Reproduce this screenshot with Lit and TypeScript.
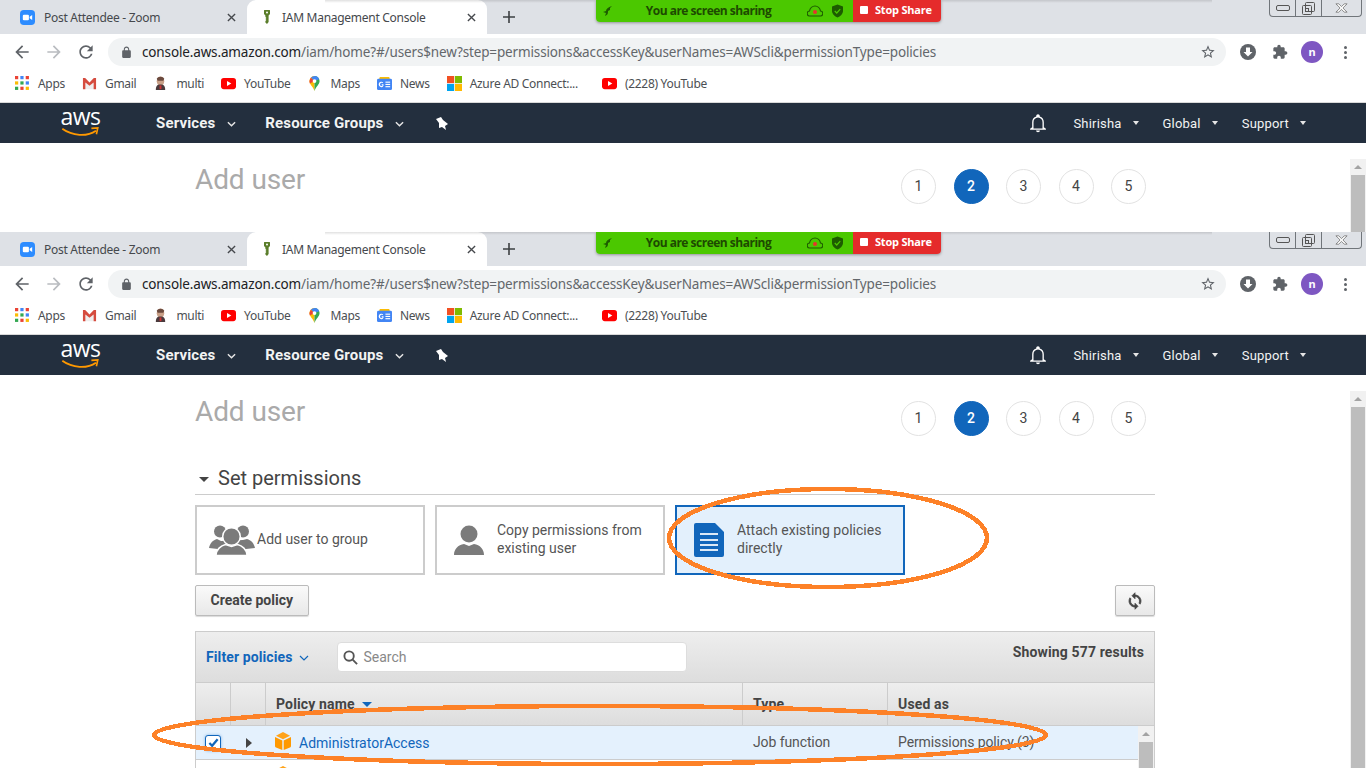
import { css, html, LitElement, svg } from "lit";
import { customElement, property } from "lit/decorators.js";

const youtube = svg`<svg class="fav" viewBox="0 0 16 16"><rect x="0" y="2" width="16" height="12" rx="3" fill="#f00"/><path d="M6.400 5.400 11 8l-4.600 2.600z" fill="#fff"/></svg>`;

const bookmarks = [
    {
        label: "Apps",
        icon: svg`<svg class="fav" viewBox="0 0 14 14">
            <rect width="3" height="3" fill="#ea4335"/><rect x="5" width="3" height="3" fill="#4285f4"/><rect x="10" width="3" height="3" fill="#ea4335"/>
            <rect y="5" width="3" height="3" fill="#fbbc05"/><rect x="5" y="5" width="3" height="3" fill="#34a853"/><rect x="10" y="5" width="3" height="3" fill="#4285f4"/>
            <rect y="10" width="3" height="3" fill="#34a853"/><rect x="5" y="10" width="3" height="3" fill="#ea4335"/><rect x="10" y="10" width="3" height="3" fill="#fbbc05"/></svg>`,
    },
    {
        label: "Gmail",
        icon: svg`<svg class="fav" viewBox="0 0 16 16"><path d="M3.600 6.800 8 10.400l4.400-3.600V14H3.600z" fill="#eee"/><path d="M1 2h2.400L8 7l4.600-5H15v12h-2.600V6.800L8 10.400 3.600 6.800V14H1z" fill="#d54c3f"/></svg>`,
    },
    {
        label: "multi",
        icon: svg`<svg class="fav" viewBox="0 0 16 16"><ellipse cx="8" cy="5.500" rx="4" ry="5" fill="#c9a088"/><path d="M4 3c1-3 7-3 8 0l-1 2H5z" fill="#6b4a3e"/><path d="M3 15c0-5 2-6 5-6s5 1 5 6z" fill="#4a3a3d"/><rect x="7" y="10" width="2" height="4" fill="#c33"/></svg>`,
    },
    { label: "YouTube", icon: youtube },
    {
        label: "Maps",
        icon: svg`<svg class="fav" viewBox="0 0 16 16"><path d="M8 0a5.400 5.400 0 0 0-5.400 5.400C2.600 9 6.500 11.500 8 16z" fill="#fbbc05"/><path d="M8 0a5.400 5.400 0 0 1 5.400 5.400C13.400 9 9.500 11.500 8 16z" fill="#34a853"/><path d="M4 1.800 8 5.400 3 8 2.600 5.400z" fill="#ea4335"/><path d="M8 0a5.400 5.400 0 0 1 5 3.400L8 5.400 4.200 1.600A5.400 5.400 0 0 1 8 0z" fill="#4285f4"/><circle cx="8" cy="5.400" r="2" fill="#fff"/></svg>`,
    },
    {
        label: "News",
        icon: svg`<svg class="fav" viewBox="0 0 16 16"><path d="M2 4 3 1h10l1 3z" fill="#fbbc05"/><rect y="3" width="16" height="12" rx="1.500" fill="#4285f4"/><rect x="9" y="6" width="5" height="1.200" fill="#fff"/><rect x="9" y="8.400" width="5" height="1.200" fill="#fff"/><rect x="9" y="10.800" width="5" height="1.200" fill="#fff"/><path d="M7 8.700H5v1.100h1c-.2.600-.6.900-1.100.900a1.700 1.700 0 0 1 0-3.400c.4 0 .8.100 1 .400l.8-.8a2.900 2.900 0 1 0-1.800 5c1.600 0 2.200-1.200 2.100-3.600z" fill="#fff"/></svg>`,
    },
    {
        label: "Azure AD Connect:...",
        icon: svg`<svg class="fav" viewBox="0 0 16 16"><rect width="7.600" height="7.600" fill="#f25022"/><rect x="8.400" width="7.600" height="7.600" fill="#7fba00"/><rect y="8.400" width="7.600" height="7.600" fill="#00a4ef"/><rect x="8.400" y="8.400" width="7.600" height="7.600" fill="#ffb900"/></svg>`,
    },
    { label: "(2228) YouTube", icon: youtube },
];

const columns = ["Policy name", "Type", "Used as"];
const steps = [1, 2, 3, 4, 5];

@customElement("browser-frame")
class BrowserFrame extends LitElement {
    // the first capture is cut off just under the step circles
    @property({ type: Boolean, reflect: true })
    cut: boolean = false;

    renderChrome() {
        return html`
      <div class="tabs">
        <div class="tab">
          <svg class="fav" viewBox="0 0 16 16"><rect width="16" height="16" rx="4" fill="#2d8cff"/><rect x="3" y="5" width="6.500" height="6" rx="1.200" fill="#fff"/><path d="M10.300 7.300 13 5.400v5.200l-2.700-1.900z" fill="#fff"/></svg>
          <span class="tab-title">Post Attendee - Zoom</span>
          <svg class="tab-x" viewBox="0 0 10 10"><path d="M1 1l8 8M9 1l-8 8"/></svg>
        </div>
        <div class="tab active">
          <svg class="fav" viewBox="4 1 8 15"><path d="M5 1.500a3.500 3.500 0 0 1 6 0v3.500L9.600 6.500V13L8 15l-1.600-1.500V12l1-1-1-1 1-1-1-1V6.500L5 5z" fill="#5a7d2a"/><circle cx="8" cy="3.500" r="1" fill="#fff"/></svg>
          <span class="tab-title">IAM Management Console</span>
          <svg class="tab-x" viewBox="0 0 10 10"><path d="M1 1l8 8M9 1l-8 8"/></svg>
        </div>
        <svg class="tab-plus" viewBox="0 0 12 12"><path d="M6 0v12M0 6h12"/></svg>
      </div>
      <div class="toolbar">
        <svg class="tool" viewBox="0 0 24 24" fill="#5f6368"><path d="M20 11H7.800l5.600-5.600L12 4l-8 8 8 8 1.400-1.400L7.800 13H20z"/></svg>
        <svg class="tool" viewBox="0 0 24 24" fill="#b9bcc0"><path d="M4 11h12.200l-5.600-5.600L12 4l8 8-8 8-1.400-1.400 5.600-5.600H4z"/></svg>
        <svg class="tool" viewBox="0 0 24 24" fill="#5f6368"><path d="M17.650 6.350A7.958 7.958 0 0 0 12 4c-4.420 0-7.990 3.580-7.990 8s3.570 8 7.990 8c3.730 0 6.840-2.550 7.730-6h-2.080A5.990 5.990 0 0 1 12 18c-3.310 0-6-2.690-6-6s2.690-6 6-6c1.660 0 3.140.690 4.220 1.780L13 11h7V4l-2.350 2.350z"/></svg>
        <div class="omnibox">
          <svg class="lock" viewBox="0 0 24 24" fill="#5f6368"><path d="M18 8h-1V6c0-2.760-2.240-5-5-5S7 3.240 7 6v2H6c-1.100 0-2 .9-2 2v10c0 1.100.9 2 2 2h12c1.100 0 2-.9 2-2V10c0-1.100-.9-2-2-2zM9 6c0-1.660 1.340-3 3-3s3 1.340 3 3v2H9V6z"/></svg>
          <span class="url"><b>console.aws.amazon.com</b>/iam/home?#/users$new?step=permissions&accessKey&userNames=AWScli&permissionType=policies</span>
          <svg class="star" viewBox="0 0 24 24" fill="#5f6368"><path d="M22 9.240l-7.190-.620L12 2 9.190 8.630 2 9.240l5.460 4.730L5.820 21 12 17.270 18.180 21l-1.630-7.030L22 9.240zM12 15.400l-3.760 2.270 1-4.280-3.320-2.880 4.380-.380L12 6.100l1.710 4.040 4.380.380-3.320 2.880 1 4.280L12 15.400z"/></svg>
        </div>
        <div class="tool-end">
          <svg class="end-icon" viewBox="0 0 16 16"><circle cx="8" cy="8" r="8" fill="#5f6368"/><path d="M6 3.500h4V8h2.500L8 12.500 3.500 8H6z" fill="#fff"/></svg>
          <svg class="end-icon" viewBox="0 0 24 24" fill="#5f6368"><path d="M20.500 11H19V7c0-1.100-.9-2-2-2h-4V3.500C13 2.120 11.880 1 10.500 1S8 2.120 8 3.500V5H4c-1.100 0-1.990.9-1.990 2v3.800H3.500c1.490 0 2.700 1.210 2.700 2.700s-1.210 2.700-2.700 2.700H2V20c0 1.100.9 2 2 2h3.800v-1.500c0-1.490 1.210-2.700 2.700-2.700 1.490 0 2.700 1.210 2.700 2.700V22H17c1.100 0 2-.9 2-2v-4h1.500c1.380 0 2.500-1.120 2.500-2.500S21.880 11 20.500 11z"/></svg>
          <span class="avatar">n</span>
          <span class="kebab"><i></i><i></i><i></i></span>
        </div>
      </div>
      <div class="bookmarks">
        ${bookmarks.map((b) => html`<span class="bookmark">${b.icon}<span>${b.label}</span></span>`)}
      </div>`;
    }

    renderNav() {
        return html`
      <nav class="nav">
        <span class="aws">
          <span class="aws-word">aws</span>
          <svg class="smile" viewBox="0 0 42 11"><path d="M1 2c11 8 27 9 37 2" fill="none" stroke="#f90" stroke-width="2"/><path d="M33 1.500l7-.5-1.500 7" fill="none" stroke="#f90" stroke-width="1.800"/></svg>
        </span>
        <span class="nav-main services">Services</span>
        <svg class="chev" viewBox="0 0 10 6"><path d="M1 1l4 4 4-4"/></svg>
        <span class="nav-main groups">Resource Groups</span>
        <svg class="chev" viewBox="0 0 10 6"><path d="M1 1l4 4 4-4"/></svg>
        <svg class="pin" viewBox="434 115 14 15" fill="#fff"><path d="M435 118l5-2 2 3 5 4-3 2 1 4-4-3-3 1v-5z"/></svg>
        <div class="nav-right">
          <svg class="bell" viewBox="0 0 24 24" fill="#fff"><path d="M12 23c1.300 0 2.300-.9 2.300-2h-4.600c0 1.100 1 2 2.300 2zm7-6v-6c0-3.400-1.800-6.200-4.900-6.900V3.500c0-1.100-.9-2-2.100-2s-2.100.9-2.100 2v.6C6.800 4.800 5 7.600 5 11v6l-2.500 2v1h19v-1L19 17zm-1.600 1.500H6.600V11c0-2.900 2-5.500 5.400-5.500s5.400 2.600 5.400 5.500z"/></svg>
          ${["Shirisha", "Global", "Support"].map(
              (m) => html`<span class="nav-item">${m}<i class="caret"></i></span>`,
          )}
        </div>
      </nav>`;
    }

    renderCards() {
        return html`
      <div class="cards">
        <div class="card">
          <svg class="card-icon group" viewBox="0 0 46 30" fill="#7b7b7b">
            <circle cx="11" cy="6.500" r="6"/><circle cx="34" cy="6.500" r="6"/>
            <path d="M0 23c1-5 4-8 8-9l4 2 22-1 4-1c4 1 7 4 8 9l-9 1H9z"/>
            <circle cx="22.500" cy="11.500" r="8.800" stroke="#fff" stroke-width="1.500"/>
            <path d="M7 30.500c0-6 5-10 9.500-11l6 2 6-2c4.500 1 9.500 5 9.500 11z" stroke="#fff" stroke-width="1.500"/>
          </svg>
          <span class="card-text">Add user to group</span>
        </div>
        <div class="card">
          <svg class="card-icon" viewBox="0 0 30 30" fill="#7b7b7b" width="30" height="30">
            <circle cx="15" cy="9" r="8.500"/><path d="M0 30c0-6 4-10 10-11l5 2 5-2c6 1 10 5 10 11z"/>
          </svg>
          <span class="card-text">Copy permissions from existing user</span>
        </div>
        <div class="card selected">
          <svg class="card-icon" viewBox="0 0 30 34" width="30" height="34">
            <path d="M2 0h19l9 9v23a2 2 0 0 1-2 2H2a2 2 0 0 1-2-2V2a2 2 0 0 1 2-2z" fill="#1166bb"/>
            <path d="M6 10h18v2H6zM6 16h18v2H6zM6 21h18v2H6zM6 26h18v2H6z" fill="#dbe9f7"/>
          </svg>
          <span class="card-text">Attach existing policies directly</span>
        </div>
      </div>`;
    }

    renderTable() {
        const cube = svg`<svg class="cube" viewBox="0 0 16 18"><path d="M0 5 7.300 8.500V18L1 15.500a1.500 1.500 0 0 1-1-1.400z" fill="#f90"/><path d="M16 5 8.700 8.500V18l6.300-2.500a1.500 1.500 0 0 0 1-1.400z" fill="#f90"/><path d="M8 0l7 3.700-7 3.600-7-3.600z" fill="#ffa31a"/></svg>`;
        return html`
      <div class="table">
        <div class="filter">
          <span class="filter-label">Filter policies</span>
          <svg class="filter-chev" viewBox="0 0 10 6"><path d="M1 1l4 4 4-4"/></svg>
          <div class="search">
            <svg class="glass" viewBox="0 0 16 16"><circle cx="6.500" cy="6.500" r="5"/><path d="M10.300 10.300 15 15"/></svg>
            <span>Search</span>
          </div>
          <span class="count">Showing 577 results</span>
        </div>
        <div class="grid head">
          <span></span>
          <span></span>
          ${columns.map(
              (c, i) => html`<span class="th">${c}${i === 0 ? html`<i class="sort"></i>` : ""}</span>`,
          )}
        </div>
        <div class="body">
          <div class="rows">
            <div class="grid row on">
              <span class="check-cell"><span class="check"><svg viewBox="0 0 12 12"><path d="M1.500 6.500 4.500 9.500 10.500 2.500"/></svg></span></span>
              <span class="arrow-cell"><i class="arrow"></i></span>
              <span class="name">${cube}<a>AdministratorAccess</a></span>
              <span class="td">Job function</span>
              <span class="td">Permissions policy (3)</span>
            </div>
            <div class="grid row">
              <span></span>
              <span></span>
              <span class="name">${cube}</span>
            </div>
          </div>
          <div class="inner-scroll"><i class="up"></i><i class="thumb"></i></div>
        </div>
      </div>`;
    }

    render() {
        return html`
      ${this.renderChrome()} ${this.renderNav()}
      <div class="page">
        <main class="main">
          <div class="title-row">
            <h1>Add user</h1>
            <div class="steps">
              ${steps.map((s) => html`<span class="step ${s === 2 ? "now" : ""}">${s}</span>`)}
            </div>
          </div>
          ${this.cut
              ? ""
              : html`
          <h2><i class="down"></i>Set permissions</h2>
          ${this.renderCards()}
          <div class="actions">
            <button class="btn">Create policy</button>
            <button class="btn refresh">
              <svg viewBox="0 0 24 24" fill="#444" stroke="#444"><path d="M12 4V1L8 5l4 4V6c3.310 0 6 2.690 6 6 0 1.010-.25 1.970-.7 2.800l1.460 1.460C19.540 15.030 20 13.570 20 12c0-4.420-3.580-8-8-8zm0 14c-3.310 0-6-2.690-6-6 0-1.010.25-1.970.7-2.800L5.240 7.740C4.460 8.970 4 10.430 4 12c0 4.420 3.580 8 8 8v3l4-4-4-4v3z"/></svg>
            </button>
          </div>
          ${this.renderTable()}`}
        </main>
        <div class="page-scroll"><i class="up"></i><i class="thumb"></i></div>
      </div>

      <div class="top-shadow"></div>
      <div class="share">
        <div class="share-green">
          <svg class="share-leaf" viewBox="0 0 10 10" fill="#1d5c00"><path d="M9 0C5 1 3 3 3 5L0 6l3 1-1 3c3-1 3-3 3-5l2-1V2z"/></svg>
          <span>You are screen sharing</span>
          <svg class="share-cloud" viewBox="0 0 16 12"><path d="M3 11a2.500 2.500 0 0 1-.5-5C3 3 5.500 1 8 1s5 2 5.500 5a2.500 2.500 0 0 1-.5 5z" fill="none" stroke="#1d5c00" stroke-width="1.200"/><circle cx="8" cy="7" r="2" fill="#e8322f"/></svg>
          <svg class="share-shield" viewBox="0 0 12 14"><path d="M6 0l6 2v5c0 3-3 6-6 7-3-1-6-4-6-7V2z" fill="#1d5c00"/><path d="M3 7l2.200 2.200L9 5" fill="none" stroke="#4bc800" stroke-width="1.300"/></svg>
        </div>
        <div class="share-red"><i></i><span>Stop Share</span></div>
      </div>
      <div class="win">
        <span><i class="win-min"></i></span>
        <span><svg class="win-max" viewBox="0 0 13 13"><rect x="3.500" y="0.500" width="9" height="9" rx="1"/><rect x="0.500" y="3.500" width="9" height="9" rx="1"/><rect x="3.500" y="6.500" width="3" height="3"/></svg></span>
        <span><svg class="win-x" viewBox="0 0 14 10"><path d="M1 0.500h3l3 3 3-3h3l-4.500 4.500 4.500 4.500h-3l-3-3-3 3h-3l4.500-4.500z"/></svg></span>
      </div>
    `;
    }

    static styles = css`
    :host {
        display: flex;
        flex-direction: column;
        position: relative;
        height: 536px;
        overflow: hidden;
        background: #fff;
        font-family: Roboto, sans-serif;
    }
    :host([cut]) {
        height: 232px;
    }
    i {
        display: block;
    }

    .tabs {
        display: flex;
        align-items: center;
        flex: none;
        height: 34px;
        padding-left: 5px;
        background: #dee1e6;
        font: 12px "Noto Sans", sans-serif;
        color: #45484c;
    }
    .tab {
        display: flex;
        align-items: center;
        width: 242px;
        height: 34px;
        box-sizing: border-box;
        padding: 0 10px 0 15px;
    }
    .tab.active {
        width: 240px;
        background: #fff;
        border-radius: 9px 9px 0 0;
    }
    .tab .fav {
        width: 15px;
        height: 15px;
    }
    .tab.active .fav {
        width: 10px;
    }
    .tab-title {
        flex: 1;
        margin-left: 9px;
        letter-spacing: -0.28px;
    }
    .tab.active .tab-title {
        margin-left: 10px;
    }
    .tab-x {
        width: 9px;
        height: 9px;
        margin-right: 1px;
        stroke: #45484c;
        stroke-width: 1.500;
    }
    .tab-plus {
        width: 12px;
        height: 12px;
        margin-left: 16px;
        stroke: #3c4043;
        stroke-width: 1.600;
    }

    .toolbar {
        display: flex;
        align-items: center;
        flex: none;
        height: 32px;
        padding: 2px 0 0 12px;
        background: #fff;
    }
    .tool {
        width: 20px;
        height: 20px;
        margin-right: 12px;
    }
    .omnibox {
        display: flex;
        align-items: center;
        width: 1118px;
        height: 28px;
        box-sizing: border-box;
        padding: 0 10px 0 12px;
        background: #f1f3f4;
        border-radius: 14px;
    }
    .lock {
        width: 13px;
        height: 13px;
    }
    .url {
        flex: 1;
        margin-left: 9px;
        font: 13.500px "Noto Sans", sans-serif;
        letter-spacing: -0.14px;
        color: #63676b;
        white-space: nowrap;
    }
    .url b {
        font-weight: 400;
        color: #202124;
    }
    .star {
        width: 16px;
        height: 16px;
    }
    .tool-end {
        display: flex;
        align-items: center;
        margin-left: 14px;
    }
    .end-icon {
        width: 16px;
        height: 16px;
        margin-right: 16px;
    }
    .avatar {
        width: 22px;
        height: 22px;
        margin-left: -3px;
        border-radius: 50%;
        background: #7e57c2;
        color: #fff;
        font: 700 11px/22px "Noto Sans", sans-serif;
        text-align: center;
    }
    .kebab {
        display: flex;
        flex-direction: column;
        gap: 2px;
        margin-left: 21px;
    }
    .kebab i {
        width: 3px;
        height: 3px;
        border-radius: 50%;
        background: #5f6368;
    }

    .bookmarks {
        display: flex;
        align-items: center;
        flex: none;
        gap: 17px;
        height: 31px;
        padding: 0 0 3px 15px;
        background: #fff;
        border-bottom: 1px solid #d9d9d9;
        font: 12px "Noto Sans", sans-serif;
        letter-spacing: -0.3px;
        color: #4c4f53;
    }
    .bookmark {
        display: flex;
        align-items: center;
        gap: 8px;
        white-space: nowrap;
    }
    .bookmark:nth-child(7) {
        margin-right: 7px;
    }
    .fav {
        flex: none;
        width: 15px;
        height: 15px;
    }

    .nav {
        display: flex;
        align-items: center;
        flex: none;
        height: 40px;
        padding-left: 60px;
        background: #232f3e;
        color: #fff;
    }
    .aws {
        display: flex;
        flex-direction: column;
        align-items: center;
        width: 41px;
        height: 33px;
        margin-top: -2px;
    }
    .aws-word {
        font: 400 23px/21px "Open Sans", sans-serif;
        letter-spacing: -0.5px;
    }
    .smile {
        width: 41px;
        height: 10px;
    }
    .nav-main {
        font-size: 15px;
        font-weight: 700;
        letter-spacing: 0.15px;
        color: #f2f3f3;
    }
    .services {
        margin-left: 55px;
    }
    .groups {
        margin-left: 29px;
    }
    .chev {
        width: 9px;
        height: 6px;
        margin: 2px 0 0 12px;
        fill: none;
        stroke: #e6e6e6;
        stroke-width: 1.600;
    }
    .pin {
        width: 14px;
        height: 15px;
        margin-left: 31px;
    }
    .nav-right {
        display: flex;
        align-items: center;
        margin-left: auto;
        padding-right: 49px;
    }
    .bell {
        width: 20px;
        height: 20px;
        margin-right: 25px;
    }
    .nav-item {
        display: flex;
        align-items: center;
        gap: 11px;
        margin-left: 13px;
        margin-right: 11px;
        font-size: 13px;
        letter-spacing: 0.2px;
        color: #f2f3f3;
    }
    .nav-item:first-of-type {
        margin-left: 0;
    }
    .caret {
        width: 0;
        height: 0;
        border: 3.500px solid transparent;
        border-top: 4px solid #e6e6e6;
        border-bottom: 0;
    }

    .page {
        display: flex;
        flex: none;
        align-items: flex-start;
    }
    .main {
        flex: none;
        width: 960px;
        margin-left: 195px;
    }
    .title-row {
        display: flex;
        justify-content: space-between;
        height: 87px;
    }
    h1 {
        margin: 21px 0 0;
        font-size: 28px;
        line-height: 32px;
        font-weight: 400;
        letter-spacing: -0.1px;
        color: #aaa;
    }
    .steps {
        display: flex;
        gap: 17.500px;
        margin: 26px 9px 0 0;
    }
    .step {
        width: 35px;
        height: 35px;
        box-sizing: border-box;
        border: 1px solid #e2e2e2;
        border-radius: 50%;
        font-size: 14px;
        line-height: 33px;
        text-align: center;
        color: #444;
    }
    .step.now {
        border-color: #1166bb;
        background: #1166bb;
        color: #fff;
        font-weight: 500;
    }
    h2 {
        display: flex;
        align-items: center;
        height: 32px;
        margin: 0;
        border-bottom: 1px solid #ccc;
        font-size: 20px;
        font-weight: 400;
        color: #444;
    }
    .down {
        width: 0;
        height: 0;
        margin: 3px 9px 0 4px;
        border: 5px solid transparent;
        border-top: 5px solid #444;
        border-bottom: 0;
    }
    .cards {
        display: flex;
        gap: 10px;
        margin-top: 10px;
    }
    .card {
        display: flex;
        align-items: center;
        width: 230px;
        height: 70px;
        box-sizing: border-box;
        border: 2px solid #ccc;
        font-size: 14px;
        line-height: 18px;
        color: #555;
    }
    .card.selected {
        border-color: #1166bb;
        background: #e3f0fc;
    }
    .card-icon {
        flex: none;
        margin: 0 13px 0 17px;
    }
    .card-icon.group {
        width: 46px;
        height: 30px;
        margin: 0 2px 0 12px;
    }
    .card-text {
        width: 165px;
        padding-bottom: 2px;
    }
    .actions {
        display: flex;
        justify-content: space-between;
        margin-top: 10px;
    }
    .btn {
        height: 31px;
        padding: 0 14.500px 2px;
        border: 1px solid #bbb;
        border-radius: 2px;
        background: linear-gradient(#fafafa, #e8e8e8);
        box-shadow: 0 1px 1px rgba(0, 0, 0, 0.15);
        font: 700 14px Roboto, sans-serif;
        color: #444;
    }
    .refresh {
        width: 40px;
        padding: 0;
    }
    .refresh svg {
        width: 18px;
        height: 18px;
        margin-top: 3px;
    }

    .table {
        margin-top: 15px;
        border-left: 1px solid #ccc;
        border-right: 1px solid #ccc;
    }
    .filter {
        display: flex;
        align-items: center;
        height: 52px;
        box-sizing: border-box;
        padding: 0 10px;
        border-top: 1px solid #ccc;
        border-bottom: 1px solid #ccc;
        background: linear-gradient(#eee, #ddd);
    }
    .filter-label {
        font-size: 14px;
        font-weight: 700;
        letter-spacing: 0.1px;
        color: #1166bb;
    }
    .filter-chev {
        width: 10px;
        height: 6px;
        margin: 2px 0 0 7px;
        fill: none;
        stroke: #1166bb;
        stroke-width: 1.200;
    }
    .search {
        display: flex;
        align-items: center;
        gap: 5px;
        width: 350px;
        height: 30px;
        box-sizing: border-box;
        margin-left: 28px;
        padding-left: 5px;
        background: #fff;
        border: 1px solid #ddd;
        border-radius: 4px;
        font-size: 14px;
        color: #888;
    }
    .glass {
        width: 15px;
        height: 15px;
        fill: none;
        stroke: #555;
        stroke-width: 2;
    }
    .count {
        align-self: flex-start;
        margin: 12px 0 0 auto;
        font-size: 14px;
        font-weight: 700;
        letter-spacing: 0.15px;
        color: #444;
    }
    .grid {
        display: grid;
        grid-template-columns: 35px 35px 477px 145px 1fr;
    }
    .head {
        height: 43px;
        box-sizing: border-box;
        border-bottom: 1px solid #ccc;
        background: linear-gradient(#eee, #ddd);
    }
    .head > span {
        border-right: 1px solid #ccc;
    }
    .head > span:last-child {
        border-right: 0;
    }
    .th {
        display: flex;
        align-items: center;
        gap: 7px;
        padding: 0 10px;
        font-size: 14px;
        font-weight: 700;
        letter-spacing: 0.15px;
        color: #444;
    }
    .sort {
        width: 0;
        height: 0;
        border: 5px solid transparent;
        border-top: 5px solid #1166bb;
        border-bottom: 0;
    }
    .body {
        display: flex;
    }
    .rows {
        flex: 1;
    }
    .row {
        height: 34px;
        box-sizing: border-box;
        border-bottom: 1px solid #ccc;
        font-size: 14px;
        color: #555;
    }
    .row.on {
        background: #e4f1fd;
    }
    .check-cell,
    .arrow-cell,
    .name,
    .td {
        display: flex;
        align-items: center;
    }
    .check-cell {
        justify-content: center;
    }
    .check {
        display: flex;
        align-items: center;
        justify-content: center;
        width: 14px;
        height: 14px;
        margin-left: -1px;
        border: 1px solid #1166bb;
        border-radius: 3px;
        background: #fff;
        box-shadow: 0 0 3px #7fb2e5;
    }
    .check svg {
        width: 11px;
        height: 11px;
        fill: none;
        stroke: #1166bb;
        stroke-width: 2.500;
    }
    .arrow-cell {
        justify-content: center;
    }
    .arrow {
        width: 0;
        height: 0;
        border: 5px solid transparent;
        border-left: 6px solid #444;
        border-right: 0;
    }
    .name {
        gap: 8px;
        padding-left: 9px;
    }
    .name a {
        color: #1166bb;
    }
    .cube {
        flex: none;
        width: 16px;
        height: 18px;
        margin-top: -3px;
    }
    .td {
        padding: 0 0 2px 10px;
        letter-spacing: -0.1px;
    }
    .inner-scroll,
    .page-scroll {
        display: flex;
        flex-direction: column;
        align-items: center;
        flex: none;
        width: 16px;
        background: #f1f1f1;
    }
    .inner-scroll {
        height: 60px;
    }
    .page-scroll {
        height: 400px;
        margin: 16px 0 0 195px;
    }
    .up {
        flex: none;
        width: 0;
        height: 0;
        margin: 6px 0;
        border: 4px solid transparent;
        border-bottom: 4px solid #a3a3a3;
        border-top: 0;
    }
    .thumb {
        flex: 1;
        width: 14px;
        background: #bdbdbd;
    }

    .top-shadow {
        position: absolute;
        top: 0;
        left: 325px;
        width: 887px;
        height: 3px;
        background: linear-gradient(rgba(0, 0, 0, 0.12), transparent);
    }
    .share {
        position: absolute;
        top: 0;
        left: 596px;
        display: flex;
        width: 345px;
        height: 22px;
        border-radius: 0 0 4px 4px;
        box-shadow: 0 1px 3px rgba(0, 0, 0, 0.35);
        overflow: hidden;
        font: 700 12px "Open Sans", sans-serif;
    }
    .share-green {
        position: relative;
        flex: 1;
        background: #4bc800;
        color: #1d4a00;
        line-height: 21px;
        text-align: center;
        letter-spacing: -0.5px;
    }
    .share-green span {
        margin-left: -32px;
    }
    .share-leaf,
    .share-cloud,
    .share-shield {
        position: absolute;
    }
    .share-leaf {
        left: 7px;
        top: 6px;
        width: 10px;
        height: 10px;
    }
    .share-cloud {
        left: 211px;
        top: 5px;
        width: 16px;
        height: 12px;
    }
    .share-shield {
        left: 236px;
        top: 4px;
        width: 11px;
        height: 14px;
    }
    .share-red {
        display: flex;
        align-items: center;
        gap: 7px;
        width: 88px;
        box-sizing: border-box;
        padding: 0 0 3px 7px;
        background: #e52b2b;
        color: #fff;
        font-size: 11px;
        letter-spacing: -0.2px;
    }
    .share-red i {
        width: 8px;
        height: 8px;
        border-radius: 1px;
        background: #fff;
    }
    .win {
        position: absolute;
        top: 0;
        left: 1269px;
        display: flex;
        width: 93px;
        height: 17px;
        box-sizing: border-box;
        border: 1px solid #70757a;
        border-top: 0;
        border-radius: 0 0 4px 4px;
    }
    .win span {
        display: flex;
        align-items: center;
        justify-content: center;
        flex: none;
        width: 25px;
        border-left: 1px solid #70757a;
    }
    .win span:first-child {
        border-left: 0;
    }
    .win span:last-child {
        flex: 1;
    }
    .win-min {
        width: 12px;
        height: 4px;
        border: 1px solid #555;
        border-radius: 2px;
    }
    .win-max {
        width: 13px;
        height: 13px;
        fill: none;
        stroke: #555;
    }
    .win-x {
        width: 13px;
        height: 10px;
        fill: #fff;
        stroke: #666;
        stroke-width: 0.800;
    }
  `;
}

@customElement("app-root")
class AppRoot extends LitElement {
    render() {
        return html`
      <browser-frame cut></browser-frame>
      <browser-frame></browser-frame>
      <svg class="marks" viewBox="0 0 1366 768">
        <ellipse cx="828" cy="538" rx="159" ry="49"/>
        <ellipse cx="600" cy="735" rx="446" ry="29"/>
      </svg>
    `;
    }

    static styles = css`
    :host {
        display: block;
        position: relative;
        width: 1366px;
        height: 768px;
        overflow: hidden;
    }
    .marks {
        position: absolute;
        top: 0;
        left: 0;
        width: 1366px;
        height: 768px;
        fill: none;
        stroke: #fd8127;
        stroke-width: 4.500;
        shape-rendering: crispEdges;
    }
  `;
}
